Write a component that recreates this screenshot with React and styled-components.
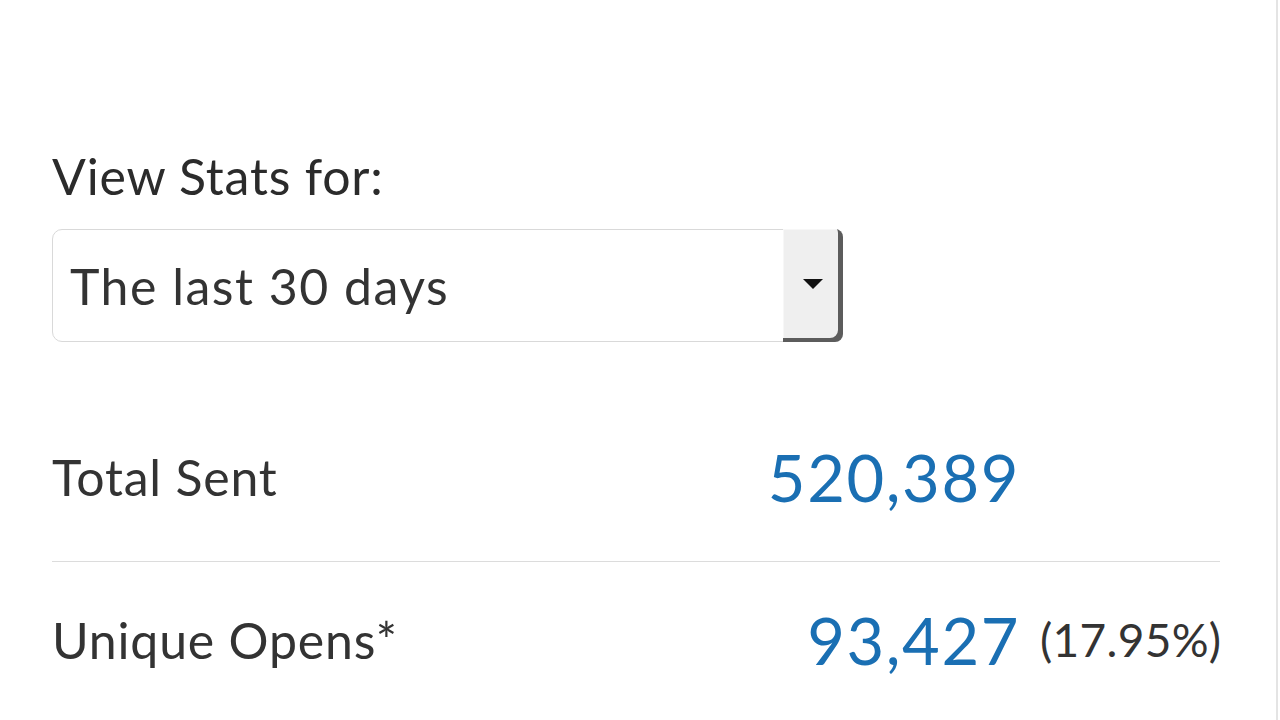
import React from 'react'
import styled, { createGlobalStyle } from 'styled-components'

const GlobalStyle = createGlobalStyle`
  html, body {
    margin: 0;
    padding: 0;
    background: #ffffff;
  }
  body {
    font-family: Lato, "Open Sans", Arial, sans-serif;
    color: #333333;
  }
`

const stats = [
  { id: 'sent', label: 'Total Sent', value: '520,389' },
  { id: 'opens', label: 'Unique Opens*', value: '93,427', percent: '(17.95%)' },
]

const App = () => {
  return (
    <>
      <GlobalStyle />
      <Sidebar>
        <Content>
          <FieldLabel>View Stats for:</FieldLabel>
          <SelectBox>
            <SelectValue>The last 30 days</SelectValue>
            <SelectButton>
              <Caret />
            </SelectButton>
          </SelectBox>
          <StatList>
            {stats.map(({ id, label, value, percent }) => (
              <StatRow key={id}>
                <StatLabel>{label}</StatLabel>
                <StatValue>{value}</StatValue>
                <StatPercent>{percent}</StatPercent>
              </StatRow>
            ))}
          </StatList>
        </Content>
      </Sidebar>
    </>
  )
}

export default App

const Sidebar = styled.div`
  width: 1276px;
  height: 720px;
  border-right: 2px solid #e4e4e4;
  overflow: hidden;
`
const Content = styled.div`
  padding: 146px 56px 0 52px;
  display: flex;
  flex-direction: column;
`
const FieldLabel = styled.div`
  font-size: 50px;
  line-height: 60px;
  letter-spacing: 0.8px;
  color: #2b2b2b;
`
const SelectBox = styled.div`
  margin-top: 23px;
  width: 791px;
  height: 113px;
  box-sizing: border-box;
  display: flex;
  align-items: stretch;
  border: 1px solid #d9d9d9;
  border-radius: 10px;
  background: #ffffff;
`
const SelectValue = styled.div`
  flex: 1;
  display: flex;
  align-items: center;
  padding-left: 17px;
  font-size: 50px;
  letter-spacing: 1.5px;
  color: #333333;
`
const SelectButton = styled.div`
  width: 60px;
  margin: -1px -1px -1px 0;
  display: flex;
  align-items: center;
  justify-content: center;
  background: #efefef;
  border-radius: 0 8px 8px 0;
  box-shadow: inset -5px -4px 0 #5c5c5c, inset 1px 1px 0 #f7f7f7;
`
const Caret = styled.span`
  width: 0;
  height: 0;
  margin-top: -4px;
  border-left: 10px solid transparent;
  border-right: 10px solid transparent;
  border-top: 10px solid #111111;
`
const StatList = styled.div`
  margin-top: 57px;
  display: flex;
  flex-direction: column;
`
const StatRow = styled.div`
  padding: 40px 0 46px;
  display: grid;
  grid-template-columns: 1fr auto 200px;
  align-items: center;
  line-height: 76px;
  & + & {
    border-top: 1px solid #dcdcdc;
  }
`
const StatLabel = styled.div`
  font-size: 50px;
  letter-spacing: 0.8px;
  color: #333333;
`
const StatValue = styled.div`
  font-size: 65px;
  letter-spacing: 1.6px;
  color: #1a6fb3;
  text-align: right;
`
const StatPercent = styled.div`
  padding-left: 20px;
  font-size: 46px;
  letter-spacing: 0.3px;
  color: #333333;
`
